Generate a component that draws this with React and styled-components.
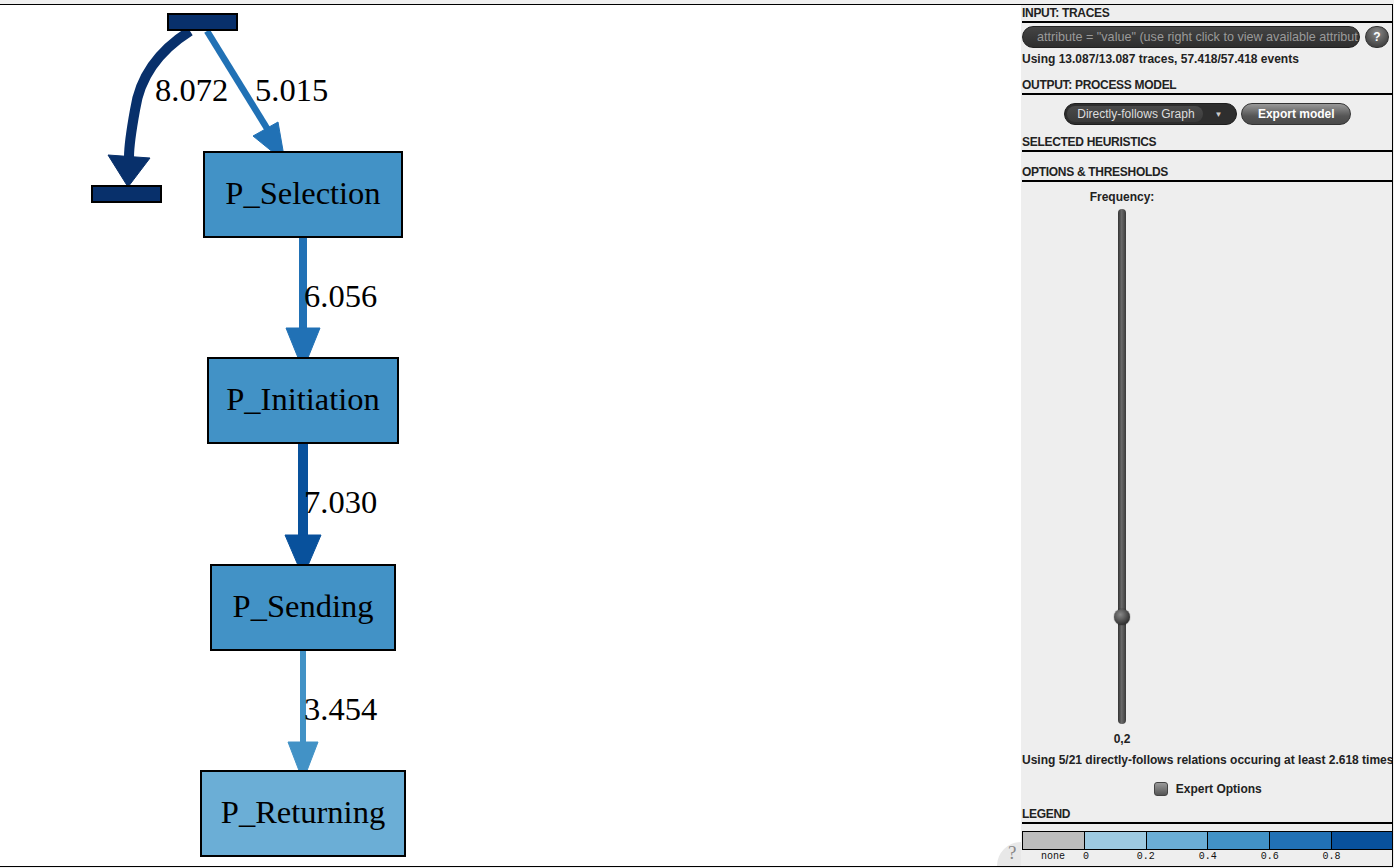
import React from 'react';
import styled, { createGlobalStyle } from 'styled-components';

const GlobalStyle = createGlobalStyle`
    html, body {
        margin: 0;
        padding: 0;
        background: #f0f0f0;
        font-family: "Liberation Sans", Arial, sans-serif;
    }
`;

const Frame = styled.div`
    position: relative;
    margin-top: 4px;
    height: 861px;
    width: 1392px;
    display: flex;
    border-top: 1px solid #000;
    border-right: 1px solid #000;
    border-bottom: 1px solid #000;
    background: #fff;
    overflow: hidden;
`;

const Canvas = styled.div`
    width: 1021px;
    flex: none;
    background: #fff;
`;

const Sidebar = styled.div`
    position: relative;
    z-index: 1;
    flex: 1;
    background: #eeeeee;
    padding: 0 1px;
    display: flex;
    flex-direction: column;
    color: #222;
`;

const Header = styled.div`
    height: 16px;
    line-height: 16px;
    font-size: 12px;
    font-weight: bold;
    letter-spacing: -0.3px;
    border-bottom: 2px solid #000;
    margin-top: ${p => p.$gap}px;
`;

const Row = styled.div`
    display: flex;
    align-items: center;
    gap: ${p => p.$gap || 0}px;
    justify-content: ${p => p.$center ? 'center' : 'flex-start'};
    margin-top: ${p => p.$top}px;
`;

const FilterPill = styled.div`
    width: 338px;
    height: 22px;
    box-sizing: border-box;
    border-radius: 11px;
    background: linear-gradient(#444, #2e2e2e);
    border: 1px solid #222;
    color: #9a9a9a;
    font-size: 12.6px;
    line-height: 20px;
    padding-left: 14px;
    white-space: nowrap;
    overflow: hidden;
`;

const HelpButton = styled.div`
    width: 24px;
    height: 22px;
    border-radius: 11px;
    margin-left: 5px;
    background: radial-gradient(circle at 50% 30%, #8a8a8a, #444 75%);
    border: 1px solid #333;
    box-sizing: border-box;
    color: #fff;
    font-weight: bold;
    font-size: 12px;
    display: flex;
    align-items: center;
    justify-content: center;
`;

const Info = styled.div`
    font-size: 12px;
    font-weight: bold;
    line-height: 14px;
    height: 14px;
    white-space: nowrap;
    margin-top: ${p => p.$top}px;
    text-align: ${p => p.$align || 'left'};
`;

const Select = styled.div`
    height: 22px;
    width: 173px;
    box-sizing: border-box;
    border-radius: 11px;
    background: #2e2e2e;
    border: 1px solid #1e1e1e;
    display: flex;
    align-items: center;
    padding: 0 2px;
`;

const SelectValue = styled.div`
    height: 16px;
    line-height: 16px;
    border-radius: 8px;
    background: linear-gradient(#4a4a4a, #3a3a3a);
    color: #ddd;
    font-size: 12px;
    padding: 0 8px 0 10px;
    white-space: nowrap;
`;

const Caret = styled.div`
    flex: 1;
    text-align: center;
    color: #ccc;
    font-size: 8px;
`;

const Button = styled.div`
    height: 22px;
    width: 110px;
    box-sizing: border-box;
    border-radius: 11px;
    background: linear-gradient(#999, #555 60%, #4a4a4a);
    border: 1px solid #333;
    color: #fff;
    font-weight: bold;
    font-size: 12px;
    display: flex;
    align-items: center;
    justify-content: center;
`;

const SliderColumn = styled.div`
    width: 200px;
    display: flex;
    flex-direction: column;
    align-items: center;
`;

const Track = styled.div`
    position: relative;
    width: 8px;
    height: 515px;
    margin-top: 5px;
    border-radius: 4px;
    background: linear-gradient(90deg, #333, #6a6a6a 45%, #3a3a3a);
`;

const Handle = styled.div`
    position: absolute;
    left: -4px;
    width: 16px;
    height: 16px;
    border-radius: 50%;
    background: radial-gradient(circle at 40% 35%, #888, #333 70%);
    box-shadow: 0 0 1px #000;
`;

const Checkbox = styled.div`
    width: 14px;
    height: 14px;
    border-radius: 3px;
    background: linear-gradient(#9a9a9a, #555);
    border: 1px solid #444;
    box-sizing: border-box;
`;

const Legend = styled.div`
    display: flex;
    height: 19px;
    box-sizing: border-box;
    border: 1px solid #000;
    margin-top: 7px;
`;

const Swatch = styled.div`
    flex: 1;
    background: ${p => p.$color};
    border-left: ${p => p.$first ? 'none' : '1px solid #000'};
`;

const Ticks = styled.div`
    display: flex;
    height: 12px;
    margin-top: 1px;
`;

const Tick = styled.div`
    flex: 1;
    font-family: "Liberation Mono", "Courier New", monospace;
    font-size: 10px;
    line-height: 12px;
    color: #111;
    text-align: ${p => p.$center ? 'center' : 'left'};
    transform: translateX(${p => p.$shift || 0}px);
`;

const CornerHelp = styled.div`
    position: absolute;
    left: 997px;
    bottom: -24px;
    width: 48px;
    height: 48px;
    border-radius: 50%;
    background: #e8e8e8;
    color: #888;
    font-family: "Liberation Serif", serif;
    font-size: 19px;
    line-height: 20px;
    padding: 1px 0 0 11px;
    box-sizing: border-box;
`;

const NODE_FONT = { fontFamily: '"Liberation Serif", "Times New Roman", serif', fontSize: 32.5 };

const nodes = [
    { x: 204, y: 152, w: 198, label: 'P_Selection', fill: '#4292c6' },
    { x: 208, y: 358, w: 190, label: 'P_Initiation', fill: '#4292c6' },
    { x: 211, y: 565, w: 184, label: 'P_Sending', fill: '#4292c6' },
    { x: 201, y: 771, w: 204, label: 'P_Returning', fill: '#6baed6' },
];

const straightEdges = [
    { y1: 237, y2: 330, width: 8, color: '#2171b5', head: 42, half: 17, label: '6.056' },
    { y1: 443, y2: 537, width: 10, color: '#08519c', head: 42, half: 18, label: '7.030' },
    { y1: 650, y2: 744, width: 6, color: '#4292c6', head: 39, half: 15, label: '3.454' },
];

const Graph = () => (
    <svg width="1021" height="861" viewBox="0 5 1021 861">
        {/* start -> end */}
        <path d="M190,31 C160,50 140,75 135,110 C131,132 129,146 129,157" fill="none" stroke="#08306b" strokeWidth="10" />
        <polygon points="108,155 150,158 128,187" fill="#08306b" stroke="#08306b" />
        {/* start -> selection */}
        <line x1="207" y1="31" x2="268" y2="130" stroke="#2171b5" strokeWidth="6.5" />
        <polygon points="253,136 278,122 285,162" fill="#2171b5" stroke="#2171b5" />
        <text x="155" y="101" {...NODE_FONT}>8.072</text>
        <text x="255" y="101" {...NODE_FONT}>5.015</text>

        {straightEdges.map(e => (
            <g key={e.label}>
                <line x1="303" y1={e.y1} x2="303" y2={e.y2} stroke={e.color} strokeWidth={e.width} />
                <polygon points={`${303 - e.half},${e.y2 - 2} ${303 + e.half},${e.y2 - 2} 303,${e.y2 + e.head - 2}`} fill={e.color} stroke={e.color} />
                <text x="304" y={e.y1 + 70} {...NODE_FONT}>{e.label}</text>
            </g>
        ))}

        <rect x="168" y="14" width="69" height="16" fill="#08306b" stroke="#000" strokeWidth="2" />
        <rect x="92" y="186" width="69" height="16" fill="#08306b" stroke="#000" strokeWidth="2" />

        {nodes.map(n => (
            <g key={n.label}>
                <rect x={n.x} y={n.y} width={n.w} height="85" fill={n.fill} stroke="#000" strokeWidth="2" />
                <text x={n.x + n.w / 2} y={n.y + 52} textAnchor="middle" {...NODE_FONT}>{n.label}</text>
            </g>
        ))}
    </svg>
);

const legend = [
    { color: '#bdbdbd', label: 'none', center: true },
    { color: '#9ecae1', label: '0', shift: -1 },
    { color: '#6baed6', label: '0.2', shift: -9 },
    { color: '#4292c6', label: '0.4', shift: -9 },
    { color: '#2171b5', label: '0.6', shift: -9 },
    { color: '#08519c', label: '0.8', shift: -9 },
];

const App = () => (
    <>
        <GlobalStyle />
        <Frame>
            <Canvas>
                <Graph />
            </Canvas>
            <Sidebar>
                <Header $gap={0}>INPUT: TRACES</Header>
                <Row $top={3}>
                    <FilterPill>attribute = "value" (use right click to view available attribut</FilterPill>
                    <HelpButton>?</HelpButton>
                </Row>
                <Info $top={4}>Using 13.087/13.087 traces, 57.418/57.418 events</Info>

                <Header $gap={11}>OUTPUT: PROCESS MODEL</Header>
                <Row $top={8} $center $gap={4}>
                    <Select>
                        <SelectValue>Directly-follows Graph</SelectValue>
                        <Caret>▼</Caret>
                    </Select>
                    <Button>Export model</Button>
                </Row>

                <Header $gap={9}>SELECTED HEURISTICS</Header>
                <Header $gap={12}>OPTIONS &amp; THRESHOLDS</Header>

                <SliderColumn>
                    <Info $top={8} $align="center">Frequency:</Info>
                    <Track>
                        <Handle style={{ top: 400 }} />
                    </Track>
                    <Info $top={8} $align="center">0,2</Info>
                </SliderColumn>

                <Info $top={7}>Using 5/21 directly-follows relations occuring at least 2.618 times</Info>
                <Row $top={15} $center $gap={8}>
                    <Checkbox />
                    <Info $top={0}>Expert Options</Info>
                </Row>

                <Header $gap={10}>LEGEND</Header>
                <Legend>
                    {legend.map((s, i) => <Swatch key={s.label} $color={s.color} $first={i === 0} />)}
                </Legend>
                <Ticks>
                    {legend.map(s => <Tick key={s.label} $center={s.center} $shift={s.shift}>{s.label}</Tick>)}
                </Ticks>
            </Sidebar>
            <CornerHelp>?</CornerHelp>
        </Frame>
    </>
);

export default App;
